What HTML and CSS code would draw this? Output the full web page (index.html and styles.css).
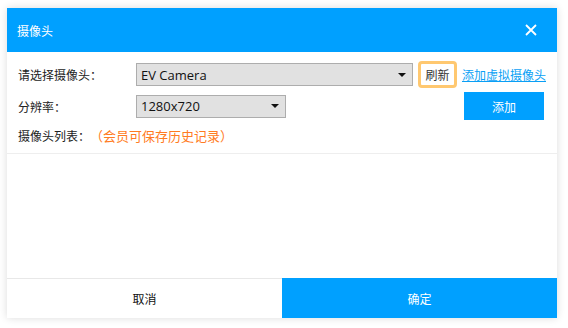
FILE: index.html
```html
<!DOCTYPE html>
<html lang="zh">
<head>
    <meta charset="UTF-8">
    <meta name="viewport" content="width=device-width, initial-scale=1.0">
    <title>摄像头</title>
    <link rel="stylesheet" href="styles.css">
</head>
<body>
    <div class="dialog">
        <header class="dialog-header">
            <span class="dialog-title">摄像头</span>
            <svg class="close" width="12" height="12" viewBox="0 0 12 12">
                <path d="M1 1 L11 11 M11 1 L1 11" stroke="#fff" stroke-width="1.8" fill="none"/>
            </svg>
        </header>

        <div class="form">
            <div class="row row-camera">
                <span class="label">请选择摄像头：</span>
                <div class="combo combo-wide">
                    <span>EV Camera</span>
                    <i class="arrow"></i>
                </div>
                <div class="refresh">刷新</div>
                <a class="link">添加虚拟摄像头</a>
            </div>
            <div class="row row-res">
                <span class="label">分辨率：</span>
                <div class="combo combo-small">
                    <span>1280x720</span>
                    <i class="arrow"></i>
                </div>
                <div class="add">添加</div>
            </div>
            <div class="row row-list">
                <span class="label-inline">摄像头列表：</span>
                <span class="note">（会员可保存历史记录）</span>
            </div>
        </div>

        <!-- 摄像头列表 -->
        <div class="list"></div>

        <footer class="dialog-footer">
            <div class="btn btn-cancel">取消</div>
            <div class="btn btn-ok">确定</div>
        </footer>
    </div>
</body>
</html>
```

FILE: styles.css
```css
body {
    margin: 0;
    padding: 0;
    background-color: #ffffff;
    font-family: "Noto Sans CJK SC", "Noto Sans", sans-serif;
    font-size: 12px;
    color: #222;
}
.dialog {
    margin: 8px 11px 10px 7px;
    height: 310px;
    display: flex;
    flex-direction: column;
    background-color: #fff;
    box-shadow: 0 0 8px rgba(0, 0, 0, 0.14);
}
.dialog-header {
    height: 44px;
    flex-shrink: 0;
    display: flex;
    align-items: center;
    justify-content: space-between;
    padding: 0 20px 0 10px;
    background-color: #00a0ff;
}
.dialog-title {
    color: #fff;
    font-size: 12px;
}
.form {
    padding: 9px 11px 8px 11px;
    border-bottom: 1px solid #eeeeee;
}
.row {
    display: flex;
    align-items: center;
}
.row-camera {
    height: 27px;
}
.row-res {
    height: 28px;
    margin-top: 4px;
}
.row-list {
    height: 20px;
    margin-top: 5px;
}
.label {
    width: 118px;
    flex-shrink: 0;
}
.combo {
    box-sizing: border-box;
    display: flex;
    align-items: center;
    justify-content: space-between;
    padding: 0 6px 0 4px;
    background-color: #e1e1e1;
    border: 1px solid #adadad;
    font-family: "Open Sans", "Noto Sans", sans-serif;
    font-size: 13px;
    color: #111;
    height: 23px;
}
.combo-wide {
    width: 277px;
}
.combo-small {
    width: 150px;
}
.arrow {
    width: 0;
    height: 0;
    border-left: 4px solid transparent;
    border-right: 4px solid transparent;
    border-top: 4px solid #111;
}
.refresh {
    margin-left: 5px;
    width: 39px;
    height: 27px;
    box-sizing: border-box;
    border: 3px solid #ffc870;
    border-radius: 4px;
    display: flex;
    align-items: center;
    justify-content: center;
    color: #333;
}
.link {
    margin-left: 5px;
    color: #0a9ff5;
    text-decoration: underline;
    cursor: pointer;
}
.add {
    margin-left: auto;
    margin-right: 2px;
    width: 80px;
    height: 28px;
    display: flex;
    align-items: center;
    justify-content: center;
    background-color: #00a0ff;
    color: #fff;
}
.note {
    color: #ff7b22;
    font-size: 13px;
}
.list {
    flex: 1;
}
.dialog-footer {
    height: 40px;
    flex-shrink: 0;
    display: flex;
}
.btn {
    flex: 1;
    display: flex;
    align-items: center;
    justify-content: center;
    cursor: pointer;
}
.btn-cancel {
    border-top: 1px solid #e8e8e8;
    color: #111;
}
.btn-ok {
    background-color: #00a0ff;
    color: #fff;
}
```
